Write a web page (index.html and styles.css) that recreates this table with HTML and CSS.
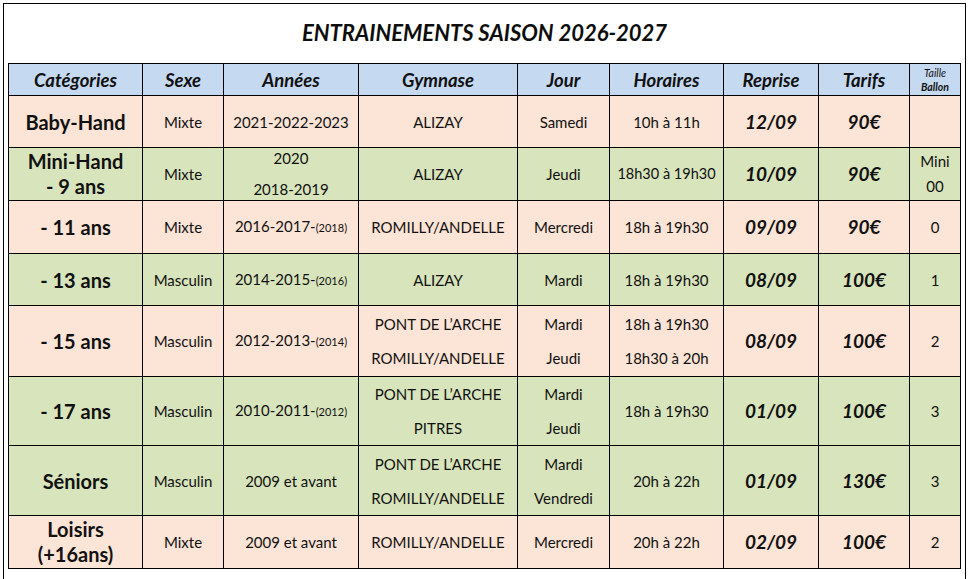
FILE: index.html
```html
<!DOCTYPE html>
<html lang="fr">
<head>
<meta charset="utf-8">
<title>Entraînements saison 2026-2027</title>
<link rel="stylesheet" href="styles.css">
</head>
<body>
<div class="frame">
  <h1 class="title">ENTRAINEMENTS SAISON 2026-2027</h1>
  <table class="planning">
    <colgroup>
      <col class="w-cat"><col class="w-sexe"><col class="w-annees"><col class="w-gym"><col class="w-jour"><col class="w-hor"><col class="w-rep"><col class="w-tar"><col class="w-tail">
    </colgroup>
    <thead>
      <tr class="r-head">
        <th>Catégories</th><th>Sexe</th><th>Années</th><th>Gymnase</th><th>Jour</th><th>Horaires</th><th>Reprise</th><th>Tarifs</th>
        <th class="tiny"><span class="t1">Taille</span><br><span class="t2">Ballon</span></th>
      </tr>
    </thead>
    <tbody>
      <tr class="peach r52">
        <td class="cat">Baby-Hand</td><td>Mixte</td><td>2021-2022-2023</td><td>ALIZAY</td><td>Samedi</td><td>10h à 11h</td><td class="rep">12/09</td><td class="tar">90€</td><td></td>
      </tr>
      <tr class="green r53">
        <td class="cat two-cat">Mini-Hand<br>- 9 ans</td><td>Mixte</td><td class="two-yr"><div class="squeeze">2020<br>2018-2019</div></td><td>ALIZAY</td><td>Jeudi</td><td class="hor-s">18h30 à 19h30</td><td class="rep">10/09</td><td class="tar">90€</td><td class="two-cat">Mini<br>00</td>
      </tr>
      <tr class="peach r53">
        <td class="cat">- 11 ans</td><td>Mixte</td><td>2016-2017-<small>(2018)</small></td><td>ROMILLY/ANDELLE</td><td>Mercredi</td><td>18h à 19h30</td><td class="rep">09/09</td><td class="tar">90€</td><td>0</td>
      </tr>
      <tr class="green r52">
        <td class="cat">- 13 ans</td><td>Masculin</td><td>2014-2015-<small>(2016)</small></td><td>ALIZAY</td><td>Mardi</td><td>18h à 19h30</td><td class="rep">08/09</td><td class="tar">100€</td><td>1</td>
      </tr>
      <tr class="peach r71">
        <td class="cat">- 15 ans</td><td>Masculin</td><td>2012-2013-<small>(2014)</small></td><td class="two">PONT DE L’ARCHE<br>ROMILLY/ANDELLE</td><td class="two">Mardi<br>Jeudi</td><td class="two">18h à 19h30<br>18h30 à 20h</td><td class="rep">08/09</td><td class="tar">100€</td><td>2</td>
      </tr>
      <tr class="green r69">
        <td class="cat">- 17 ans</td><td>Masculin</td><td>2010-2011-<small>(2012)</small></td><td class="two">PONT DE L’ARCHE<br>PITRES</td><td class="two">Mardi<br>Jeudi</td><td>18h à 19h30</td><td class="rep">01/09</td><td class="tar">100€</td><td>3</td>
      </tr>
      <tr class="green r70">
        <td class="cat">Séniors</td><td>Masculin</td><td>2009 et avant</td><td class="two">PONT DE L’ARCHE<br>ROMILLY/ANDELLE</td><td class="two">Mardi<br>Vendredi</td><td>20h à 22h</td><td class="rep">01/09</td><td class="tar">130€</td><td>3</td>
      </tr>
      <tr class="peach r53">
        <td class="cat two-cat">Loisirs<br>(+16ans)</td><td>Mixte</td><td>2009 et avant</td><td>ROMILLY/ANDELLE</td><td>Mercredi</td><td>20h à 22h</td><td class="rep">02/09</td><td class="tar">100€</td><td>2</td>
      </tr>
    </tbody>
  </table>
</div>
</body>
</html>
```

FILE: styles.css
```css
html, body {
  margin: 0;
  padding: 0;
  background: #ffffff;
}

body {
  font-family: Lato, "Liberation Sans", sans-serif;
  color: #111111;
  overflow: hidden;
}

.frame {
  box-sizing: border-box;
  margin: 3px 0 0 3px;
  width: 963px;
  height: 577px;
  border: 1px solid #000000;
}

.title {
  margin: 0;
  height: 59px;
  display: flex;
  align-items: center;
  justify-content: center;
  font-size: 22px;
  font-weight: 700;
  font-style: italic;
  color: #0d0d0d;
  padding-bottom: 3px;
  box-sizing: border-box;
}

.planning {
  margin-left: 4px;
  border-collapse: collapse;
  table-layout: fixed;
  width: 952px;
}

.w-cat { width: 134px; }
.w-sexe { width: 81px; }
.w-annees { width: 135px; }
.w-gym { width: 159px; }
.w-jour { width: 92px; }
.w-hor { width: 114px; }
.w-rep { width: 95px; }
.w-tar { width: 91px; }
.w-tail { width: 51px; }

.planning th,
.planning td {
  border: 1px solid #000000;
  padding: 0;
  text-align: center;
  vertical-align: middle;
  white-space: nowrap;
  overflow: hidden;
}

.planning td {
  font-size: 15px;
  line-height: 18px;
}

.planning th {
  background: #c5d9f1;
  font-size: 18.5px;
  font-weight: 700;
  font-style: italic;
  line-height: 20px;
}

.planning th.tiny {
  font-size: 10.5px;
  line-height: 14px;
}

.t1 { font-weight: 400; }
.t2 { font-weight: 700; }

.r-head { height: 32px; }
.r52 { height: 52px; }
.r53 { height: 53px; }
.r69 { height: 69px; }
.r70 { height: 70px; }
.r71 { height: 71px; }

.peach td { background: #fce4d6; }
.green td { background: #d8e4bc; }

.planning td.cat {
  font-size: 20px;
  font-weight: 700;
}

.planning td.two-cat {
  line-height: 25px;
}

.planning td.two-yr {
  line-height: 31px;
}

.squeeze {
  margin: -6px 0;
}

.planning td.two {
  line-height: 34px;
}

.planning td.hor-s {
  font-size: 14.5px;
}

.planning td.rep {
  font-size: 19px;
  font-weight: 700;
  font-style: italic;
}

.planning td.tar {
  font-size: 19px;
  font-weight: 700;
  font-style: italic;
}

.planning small {
  font-size: 11px;
}
```
